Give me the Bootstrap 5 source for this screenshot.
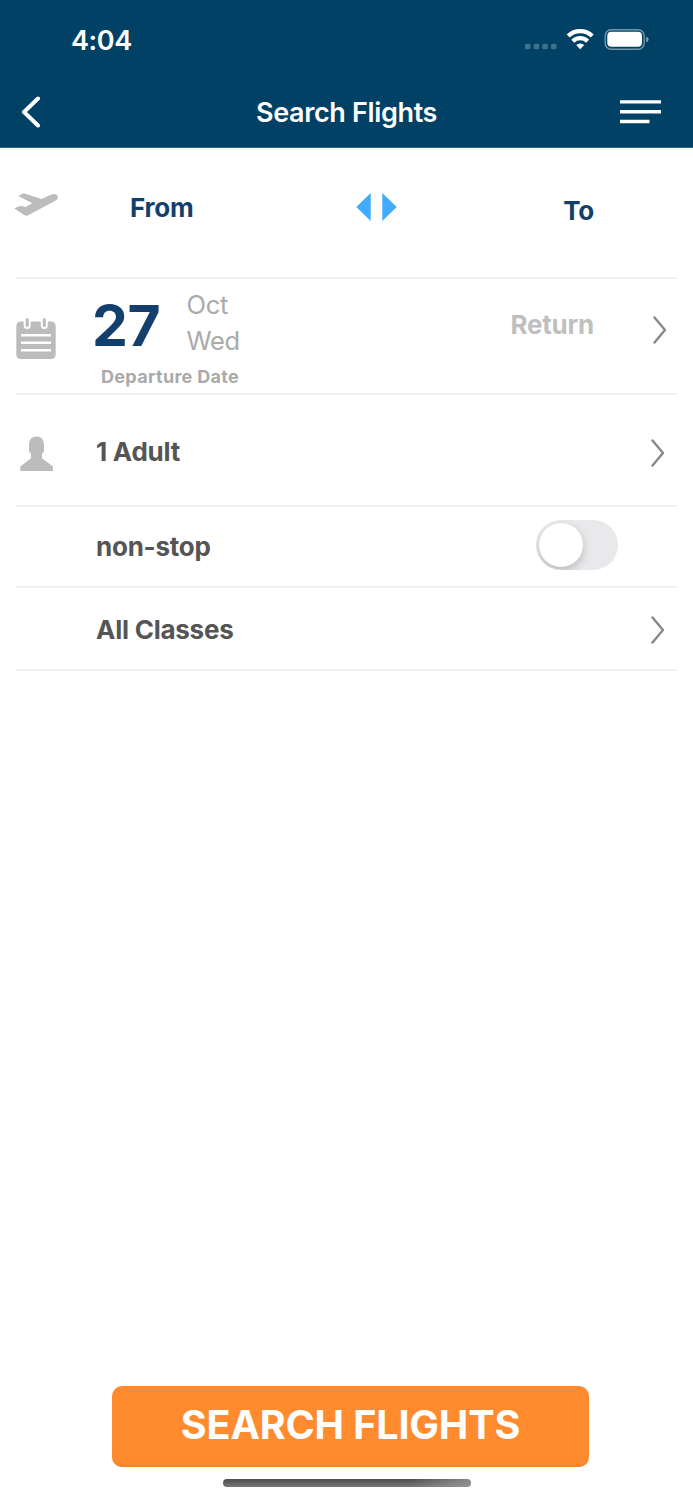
<!DOCTYPE html>
<html lang="en">
<head>
<meta charset="utf-8">
<meta name="viewport" content="width=device-width, initial-scale=1">
<title>Search Flights</title>
<link rel="stylesheet" href="https://cdn.jsdelivr.net/npm/bootstrap@5.3.0/dist/css/bootstrap.min.css">
<style>
body { font-family: Inter, "Liberation Sans", sans-serif; background: #fff; color: #555; font-size: 26px; line-height: 30px; }
svg { display: block; flex: none; }
.screen { height: 1500px; overflow: hidden; }
.topbar { background: #004165; color: #fff; height: 148px; border-bottom: 1px solid #33678a; }
.statusbar { height: 76px; padding: 25px 44px 0 71px; }
.clock { font-size: 27px; font-weight: 600; letter-spacing: -.4px; padding-top: 1px; }
.titlebar { height: 71px; padding: 0 32px 0 21px; display: grid; grid-template-columns: 52px 1fr 41px; }
.title { font-size: 27px; font-weight: 600; letter-spacing: -.35px; padding-top: 2px; }
.form-rows { margin: 0 16px; }
.field { border-bottom: 2px solid #f0f0f0; }
.route { height: 131px; }
.dates { height: 116px; }
.people { height: 112px; }
.nonstop { height: 81px; }
.classes { height: 83px; }
.lead-icon { width: 80px; flex: none; }
.navy { color: #133f6c; }
.semi { font-weight: 700; letter-spacing: -.25px; }
.daynum { font-size: 57px; font-weight: 700; line-height: 60px; width: 93px; letter-spacing: -.3px; }
.soft { color: #aaa; }
.month { font-size: 25.5px; line-height: 36px; letter-spacing: -.3px; margin: 8px 0 0 1.5px; }
.small-label { font-size: 18px; line-height: 22px; letter-spacing: .32px; }
.pale { color: #bfbfbf; }
.toggle { width: 82px; height: 50px; border-radius: 25px; background: #e9e9eb; padding: 3px; overflow: hidden; }
.knob { width: 44px; height: 44px; border-radius: 50%; background: #fff; box-shadow: 0 4px 10px rgba(0,0,0,.2); }
.cta { width: 477px; height: 81px; margin-left: 112px; border: 0; border-radius: 10px; background: #ff8b2e; color: #fff; font-size: 39.5px; font-weight: 700; letter-spacing: -.15px; line-height: 48px; box-shadow: inset 0 -4px 3px -2px #f0832c; padding: 0 0 4px; }
.cta:hover { background: #ff8b2e; color: #fff; }
.home-bar { width: 248px; height: 8px; border-radius: 4px; margin: 12px 0 13px 223px; background: linear-gradient(90deg, transparent 75%, rgba(160,160,160,.7)), linear-gradient(#4a4f4b, #777); }
</style>
</head>
<body>
<main class="screen d-flex flex-column">
  <header class="topbar flex-shrink-0">
    <div class="statusbar d-flex">
      <span class="clock me-auto">4:04</span>
      <svg width="126" height="30" viewBox="523 25 126 30" fill="#fff">
        <g opacity=".25"><rect x="525" y="43.700" width="5.500" height="5.500" rx="1.500"/><rect x="533.700" y="43.700" width="5.500" height="5.500" rx="1.500"/><rect x="542.300" y="43.700" width="5.500" height="5.500" rx="1.500"/><rect x="551" y="43.700" width="5.500" height="5.500" rx="1.500"/></g>
        <g fill="none" stroke="#fff" stroke-width="4.200"><path d="M568.200 36.100a17.200 17.200 0 0 1 24 0"/><path d="M572.800 41.200a10.500 10.500 0 0 1 14.800 0"/></g>
        <path d="M576.200 45a5.800 5.800 0 0 1 8 0l-4 4.300z"/>
        <rect x="605.200" y="29.700" width="39" height="19.600" rx="6" fill="none" stroke="#fff" stroke-opacity=".45" stroke-width="1.400"/>
        <rect x="607.300" y="31.800" width="34.700" height="15" rx="4"/>
        <path d="M646.200 36.600q2.400 1 2.400 2.900t-2.400 2.900z" opacity=".5"/>
      </svg>
    </div>
    <nav class="titlebar align-items-center" aria-label="Title">
      <svg width="20" height="32" viewBox="0 0 20 32" fill="none" stroke="#fff" stroke-width="4" stroke-linecap="round" stroke-linejoin="round"><path d="M17 2.500 3 16 17 29.500"/></svg>
      <span class="title text-center">Search Flights</span>
      <svg width="41" height="24" viewBox="0 0 41 24" fill="#fff"><path d="M0 .2h41v3.400H0zM0 10h41v3.400H0zM0 19.800h29.500v3.400H0z"/></svg>
    </nav>
  </header>

  <section class="form-rows">
    <div class="field route d-flex align-items-start">
      <svg width="46" height="26" viewBox="14 191 46 26" fill="#bcbcbc" style="margin:43px 0 0 -2px"><path d="M14.300 208.500l5.200-2.500q3.200.2 6 .9l6.800-3.700-14.100-7.300 4.200-2.200q1.400-.6 3 0l16.200 5.300 9.700-4.400q4.700-1.900 6.200 1.200 1.200 3.300-2.500 5.200L28 215.300q-2 .9-3.700-.2z"/></svg>
      <span class="navy semi" style="margin:45px 0 0 70px">From</span>
      <svg class="ms-auto" width="41" height="28" viewBox="0 0 41 28" fill="#42acfc" style="margin-top:45px"><path d="M14.700 0v28L.3 14zM26.300 0v28l14.400-14z"/></svg>
      <span class="navy semi text-end" style="margin:48px 83px 0 0;width:197px">To</span>
    </div>

    <div class="field dates d-flex align-items-start">
      <div class="lead-icon"><svg width="40" height="42" viewBox="0 0 40 42" style="margin-top:39px"><rect x=".3" y="3.500" width="39.400" height="37.500" rx="4.500" fill="#bcbcbc"/><g fill="none" stroke="#fff" stroke-linecap="round"><path stroke-width="7" d="M11.200 1v6.500M28.300 1v6.500"/><path stroke-width="2.400" stroke-linecap="butt" d="M5 17.300h30M5 24.800h30M5 32.300h30"/></g><path d="M11.200 1.500v6M28.300 1.500v6" stroke="#bcbcbc" stroke-width="3" stroke-linecap="round"/></svg></div>
      <div>
        <div class="d-flex">
          <span class="daynum navy" style="margin:17px 0 0 -4px">27</span>
          <div class="soft month"><div>Oct</div><div>Wed</div></div>
        </div>
        <div class="small-label soft fw-bold" style="margin:7px 0 0 5px">Departure Date</div>
      </div>
      <span class="pale semi ms-auto" style="margin:31px 59px 0 0">Return</span>
      <svg width="14" height="28" viewBox="0 0 14 28" fill="none" stroke="#888" stroke-width="2.400" stroke-linecap="round" stroke-linejoin="round" style="margin:37px 10px 0 0"><path d="M1.500 1.500 12 14 1.500 26.500"/></svg>
    </div>

    <div class="field people d-flex align-items-start">
      <div class="lead-icon"><svg width="34" height="35" viewBox="0 0 34 35" fill="#bcbcbc" style="margin:41px 0 0 4px"><path d="M.3 35v-4.500L11 22.200v-4.500q-1.800-.8-2-2.700V8.500Q9.300.5 16.500.5T24 8.500V15q-.2 1.900-2 2.700v4.500l11 8.300V35z"/></svg></div>
      <span class="semi" style="margin-top:42px">1 Adult</span>
      <svg class="ms-auto" width="14" height="28" viewBox="0 0 14 28" fill="none" stroke="#888" stroke-width="2.400" stroke-linecap="round" stroke-linejoin="round" style="margin:44px 12px 0 0"><path d="M1.500 1.500 12 14 1.500 26.500"/></svg>
    </div>

    <div class="field nonstop d-flex align-items-start">
      <span class="semi" style="margin:25px 0 0 80px">non-stop</span>
      <div class="toggle ms-auto" role="switch" aria-checked="false" style="margin:13px 59px 0 0"><div class="knob"></div></div>
    </div>

    <div class="field classes d-flex align-items-start">
      <span class="semi" style="margin:27px 0 0 80px">All Classes</span>
      <svg class="ms-auto" width="14" height="28" viewBox="0 0 14 28" fill="none" stroke="#888" stroke-width="2.400" stroke-linecap="round" stroke-linejoin="round" style="margin:28px 12px 0 0"><path d="M1.500 1.500 12 14 1.500 26.500"/></svg>
    </div>
  </section>

  <button type="button" class="btn cta mt-auto flex-shrink-0">SEARCH FLIGHTS</button>
  <div class="home-bar flex-shrink-0"></div>
</main>
<script src="https://cdn.jsdelivr.net/npm/bootstrap@5.3.0/dist/js/bootstrap.bundle.min.js"></script>
</body>
</html>
